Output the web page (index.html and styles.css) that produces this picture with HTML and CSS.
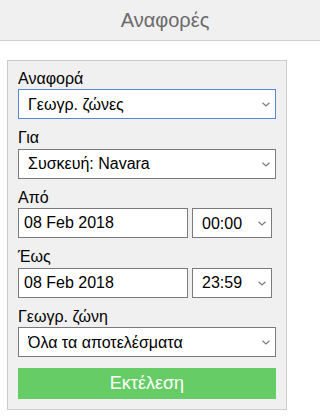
FILE: index.html
```html
<!DOCTYPE html>
<html lang="el">
<head>
<meta charset="utf-8">
<title>Αναφορές</title>
<link rel="stylesheet" href="styles.css">
</head>
<body>
<header class="topbar">Αναφορές</header>
<form class="panel">
  <div class="group">
    <label class="lbl">Αναφορά</label>
    <div class="sel-wrap">
      <select class="sel focused"><option>Γεωγρ. ζώνες</option></select>
      <svg class="chev" width="8" height="5" viewBox="0 0 8 5"><path d="M0.5 0.8 L4 4 L7.5 0.8" fill="none" stroke="#7a7a7a" stroke-width="1.2"/></svg>
    </div>
  </div>
  <div class="group">
    <label class="lbl">Για</label>
    <div class="sel-wrap">
      <select class="sel"><option>Συσκευή: Navara</option></select>
      <svg class="chev" width="8" height="5" viewBox="0 0 8 5"><path d="M0.5 0.8 L4 4 L7.5 0.8" fill="none" stroke="#7a7a7a" stroke-width="1.2"/></svg>
    </div>
  </div>
  <div class="group">
    <label class="lbl">Από</label>
    <div class="row">
      <input class="date" type="text" value="08 Feb 2018">
      <div class="sel-wrap time">
        <select class="sel"><option>00:00</option></select>
        <svg class="chev" width="8" height="5" viewBox="0 0 8 5"><path d="M0.5 0.8 L4 4 L7.5 0.8" fill="none" stroke="#7a7a7a" stroke-width="1.2"/></svg>
      </div>
    </div>
  </div>
  <div class="group">
    <label class="lbl">Έως</label>
    <div class="row">
      <input class="date" type="text" value="08 Feb 2018">
      <div class="sel-wrap time">
        <select class="sel"><option>23:59</option></select>
        <svg class="chev" width="8" height="5" viewBox="0 0 8 5"><path d="M0.5 0.8 L4 4 L7.5 0.8" fill="none" stroke="#7a7a7a" stroke-width="1.2"/></svg>
      </div>
    </div>
  </div>
  <div class="group">
    <label class="lbl">Γεωγρ. ζώνη</label>
    <div class="sel-wrap">
      <select class="sel"><option>Όλα τα αποτελέσματα</option></select>
      <svg class="chev" width="8" height="5" viewBox="0 0 8 5"><path d="M0.5 0.8 L4 4 L7.5 0.8" fill="none" stroke="#7a7a7a" stroke-width="1.2"/></svg>
    </div>
  </div>
  <button class="run" type="button">Εκτέλεση</button>
</form>
</body>
</html>
```
FILE: styles.css
```css
* { box-sizing: border-box; }
html, body {
  margin: 0;
  padding: 0;
  background: #ffffff;
  font-family: "Liberation Sans", Arial, sans-serif;
  color: #000;
}
.topbar {
  height: 41px;
  line-height: 40px;
  background: #f0f0f0;
  border-bottom: 1px solid #cfcfcf;
  text-align: center;
  font-size: 20px;
  color: #6a6a6a;
  padding-left: 10px;
}
.panel {
  margin: 19px 0 0 7px;
  width: 280px;
  background: #f0f0f0;
  border: 1px solid #cccccc;
  padding: 9px 10px 10px 10px;
  display: flex;
  flex-direction: column;
}
.group {
  display: flex;
  flex-direction: column;
  margin-bottom: 10px;
}
.lbl {
  font-size: 16px;
  line-height: 18.4px;
  margin-bottom: 1px;
  color: #000;
}
.sel-wrap {
  position: relative;
  display: flex;
}
.sel {
  appearance: none;
  -webkit-appearance: none;
  width: 100%;
  height: 30px;
  border: 1px solid #7a7a7a;
  border-radius: 0;
  background: #ffffff;
  font-family: "Liberation Sans", Arial, sans-serif;
  font-size: 16px;
  color: #000;
  padding: 0 20px 0 9px;
  margin: 0;
  outline: none;
}
.sel.focused {
  border-color: #5b84d6;
}
.chev {
  position: absolute;
  right: 6px;
  top: 13px;
  pointer-events: none;
}
.row {
  display: flex;
  gap: 4px;
}
.date {
  width: 170px;
  height: 30px;
  border: 1px solid #7a7a7a;
  border-radius: 0;
  background: #fff;
  font-family: "Liberation Sans", Arial, sans-serif;
  font-size: 16px;
  color: #000;
  padding: 0 5px;
  margin: 0;
  outline: none;
}
.time {
  width: 80px;
}
.run {
  margin-top: 1px;
  height: 31px;
  border: none;
  border-radius: 0;
  background: #66cc66;
  color: #ffffff;
  font-family: "Liberation Sans", Arial, sans-serif;
  font-size: 18px;
  padding: 0;
}
```
